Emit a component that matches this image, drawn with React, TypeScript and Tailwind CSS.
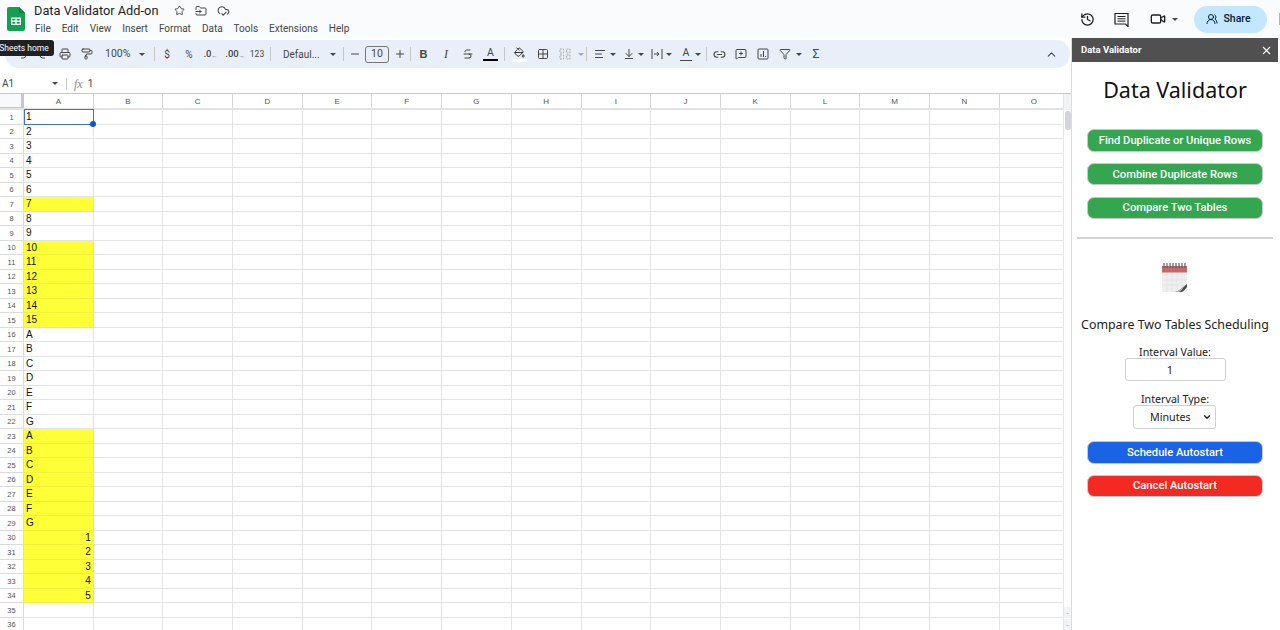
import type { ReactNode } from "react"
import {
  ArrowDownToLine,
  ChevronDown,
  ChevronUp,
  CloudCheck,
  Filter,
  FolderInput,
  Grid2x2,
  History,
  Link2,
  MessageSquarePlus,
  Minus,
  PaintBucket,
  PaintRoller,
  Plus,
  Printer,
  Redo2,
  Star,
  Strikethrough,
  Undo2,
  UsersRound,
  Video,
  X,
  AlignLeft,
} from "lucide-react"

const columns = ["A", "B", "C", "D", "E", "F", "G", "H", "I", "J", "K", "L", "M", "N", "O"]
const menus = ["File", "Edit", "View", "Insert", "Format", "Data", "Tools", "Extensions", "Help"]

type Row = { value?: string; yellow?: boolean; right?: boolean }

const rows: Row[] = [
  { value: "1" },
  { value: "2" },
  { value: "3" },
  { value: "4" },
  { value: "5" },
  { value: "6" },
  { value: "7", yellow: true },
  { value: "8" },
  { value: "9" },
  { value: "10", yellow: true },
  { value: "11", yellow: true },
  { value: "12", yellow: true },
  { value: "13", yellow: true },
  { value: "14", yellow: true },
  { value: "15", yellow: true },
  { value: "A" },
  { value: "B" },
  { value: "C" },
  { value: "D" },
  { value: "E" },
  { value: "F" },
  { value: "G" },
  { value: "A", yellow: true },
  { value: "B", yellow: true },
  { value: "C", yellow: true },
  { value: "D", yellow: true },
  { value: "E", yellow: true },
  { value: "F", yellow: true },
  { value: "G", yellow: true },
  { value: "1", yellow: true, right: true },
  { value: "2", yellow: true, right: true },
  { value: "3", yellow: true, right: true },
  { value: "4", yellow: true, right: true },
  { value: "5", yellow: true, right: true },
  {},
  {},
]

function Caret({ className = "" }: { className?: string }) {
  return (
    <span
      className={`inline-block h-0 w-0 shrink-0 border-x-[3px] border-t-[3px] border-x-transparent border-t-[#444746] ${className}`}
    />
  )
}

function Tool({ children, w = "w-[22px]" }: { children: ReactNode; w?: string }) {
  return <div className={`flex h-full shrink-0 items-center justify-center ${w}`}>{children}</div>
}

function Sep({ className = "" }: { className?: string }) {
  return <div className={`h-[14px] w-px shrink-0 bg-[#c7c7c7] ${className}`} />
}

function SheetsLogo() {
  return (
    <svg width="18" height="24" viewBox="0 0 18 24" className="shrink-0">
      <path d="M2 0h10l6 6v16a2 2 0 0 1-2 2H2a2 2 0 0 1-2-2V2a2 2 0 0 1 2-2z" fill="#12a150" />
      <path d="M12 0l6 6h-4.500A1.500 1.500 0 0 1 12 4.500z" fill="#0b7f3e" />
      <path d="M4 10.500h10v7.500H4z" fill="#fff" />
      <path d="M5.300 11.800h3v1.800h-3zM9.700 11.800h3v1.800h-3zM5.300 15h3v1.800h-3zM9.700 15h3v1.800h-3z" fill="#12a150" />
    </svg>
  )
}

function CommentIcon() {
  return (
    <svg width="15" height="15" viewBox="0 0 15 15" fill="none" stroke="#1f1f1f" strokeWidth="1.200" className="ml-[19px]">
      <path d="M1 1.500h13v13l-2.500-2.500H1z" />
      <path d="M3.500 4.500h8M3.500 6.800h8M3.500 9.100h8" strokeWidth="1" />
    </svg>
  )
}

function CalendarIcon() {
  return (
    <svg width="27" height="30" viewBox="0 0 27 30">
      <rect x="1" y="4" width="25" height="26" fill="#efefef" />
      <path d="M1 13h25M1 18h25M1 23h25M6 10v20M11 10v20M16 10v20M21 10v20" stroke="#e2e2e2" strokeWidth="0.7" />
      <rect x="1" y="4" width="25" height="6.500" fill="#c4686c" />
      <path d="M3 1v5M6 1v5M9 1v5M12 1v5M15 1v5M18 1v5M21 1v5M24 1v5" stroke="#55565a" strokeWidth="1.100" />
      <path d="M14 30c5-1 8-5 12-8v3c-2 2-3 4-5 5z" fill="#4a4a4a" />
      <path d="M14 30c4-1 6-3 9-6-1 3-3 5-5 6z" fill="#b5b5b5" />
    </svg>
  )
}

function Toolbar() {
  const icon = "h-[12px] w-[12px] text-[#444746]"
  return (
    <div className="relative ml-[5px] mt-[2px] flex h-[28px] w-[1065px] items-center rounded-full bg-[#e9eff8] pl-[6px] pr-[10px] font-['Roboto',sans-serif] text-[#444746]">
      <Tool><Undo2 className={icon} /></Tool>
      <Tool w="w-[21px]"><Redo2 className={icon} /></Tool>
      <Tool><Printer className={icon} /></Tool>
      <Tool><PaintRoller className={icon} /></Tool>
      <div className="flex h-full w-[50px] shrink-0 items-center pl-[7px] text-[10.500px]">
        100%
        <Caret className="ml-[9px]" />
      </div>
      <Sep className="ml-[6px] mr-[1px]" />
      <Tool><span className="text-[10px]">$</span></Tool>
      <Tool><span className="text-[10px]">%</span></Tool>
      <Tool w="w-[21px]"><span className="text-[9.500px] font-medium">.0<sub className="text-[6px]">←</sub></span></Tool>
      <Tool w="w-[25px]"><span className="pl-[3px] text-[9.500px] font-medium">.00<sub className="text-[6px]">→</sub></span></Tool>
      <Tool><span className="text-[8.500px]">123</span></Tool>
      <Sep className="ml-[2px] mr-[1px]" />
      <div className="flex h-full w-[71px] shrink-0 items-center pl-[11px] text-[10px]">
        Defaul...
        <Caret className="ml-[10px]" />
      </div>
      <Sep />
      <Tool><Minus className={icon} /></Tool>
      <div className="-ml-px flex h-[17px] w-[24px] shrink-0 items-center justify-center rounded-[3px] border border-[#747775] text-[10.500px]">
        10
      </div>
      <Tool w="w-[21px]"><Plus className={icon} /></Tool>
      <Sep />
      <Tool w="w-[24px]"><span className="pl-[1px] font-['Liberation_Sans',sans-serif] text-[11px] font-bold">B</span></Tool>
      <Tool><span className="font-['Liberation_Serif',serif] text-[12px] italic">I</span></Tool>
      <Tool><Strikethrough className={icon} /></Tool>
      <Tool w="w-[23px]">
        <div className="flex flex-col items-center leading-none">
          <span className="text-[10.500px] leading-[11px]">A</span>
          <span className="mt-px h-[2px] w-[15px] bg-black" />
        </div>
      </Tool>
      <Sep className="ml-[2px]" />
      <Tool w="w-[29px]">
        <div className="flex flex-col items-center">
          <PaintBucket className="h-[11px] w-[11px] text-[#1f1f1f]" />
          <span className="mt-px h-[3px] w-[15px] bg-white" />
        </div>
      </Tool>
      <Tool w="w-[18px]"><Grid2x2 className={icon} /></Tool>
      <Tool w="w-[26px]">
        <svg width="12" height="12" viewBox="0 0 12 12" fill="none" stroke="#a9abad" strokeWidth="1" strokeDasharray="2 1">
          <path d="M1 1h3.500v4H1zM7.500 1H11v4H7.500zM1 7h3.500v4H1zM7.500 7H11v4H7.500z" />
        </svg>
      </Tool>
      <Caret className="opacity-40" />
      <Sep className="ml-[2px] mr-[2px]" />
      <Tool w="w-[22px]"><AlignLeft className={icon} /></Tool>
      <Caret className="-ml-px" />
      <Tool w="w-[26px]"><ArrowDownToLine className={icon} /></Tool>
      <Caret className="-ml-[4px]" />
      <Tool w="w-[26px]">
        <svg width="12" height="12" viewBox="0 0 12 12" fill="none" stroke="#444746" strokeWidth="1">
          <path d="M1 1v10M11 1v10M3 6h5M6 4l2 2-2 2" />
        </svg>
      </Tool>
      <Caret className="-ml-[4px]" />
      <Tool w="w-[28px]">
        <div className="flex flex-col items-center leading-none">
          <span className="text-[10.500px] leading-[10px]">A</span>
          <span className="mt-[2px] h-px w-[12px] bg-[#444746]" />
        </div>
      </Tool>
      <Caret className="-ml-[5px]" />
      <Sep className="ml-[5px]" />
      <Tool w="w-[25px]"><Link2 className="h-[13px] w-[13px] text-[#444746]" /></Tool>
      <Tool w="w-[18px]"><MessageSquarePlus className={icon} /></Tool>
      <Tool w="w-[26px]">
        <svg width="12" height="12" viewBox="0 0 12 12" fill="none" stroke="#444746" strokeWidth="1">
          <rect x="1" y="1" width="10" height="10" rx="1" />
          <path d="M4 9V6M6.500 9V3M8.500 9V8" />
        </svg>
      </Tool>
      <Tool w="w-[18px]"><Filter className={icon} /></Tool>
      <Caret className="ml-[2px]" />
      <Tool w="w-[28px]"><span className="text-[12px]">Σ</span></Tool>
      <ChevronUp className="absolute left-[1040px] top-[8px] h-[13px] w-[13px] text-[#444746]" />
    </div>
  )
}

function FormulaBar() {
  return (
    <div className="mt-[4px] flex h-[21px] items-center pt-[2px] font-['Roboto',sans-serif] text-[10px] text-[#444746]">
      <span className="w-[52px] pl-[2px]">A1</span>
      <Caret />
      <span className="ml-[8px] h-[12px] w-px bg-[#c7c7c7]" />
      <span className="ml-[7px] font-['Liberation_Serif',serif] text-[12px] italic text-[#8b8d8f]">fx</span>
      <span className="ml-[5px]">1</span>
    </div>
  )
}

function Grid() {
  return (
    <div className="relative min-h-0 flex-1 overflow-hidden border-t border-[#c7c7c7] font-['Liberation_Sans',sans-serif]">
      <div className="grid h-[16px] grid-cols-[24px_repeat(15,69.7px)] border-b-2 border-[#e1e3e3] text-[8px] text-[#555]">
        <div className="border-b border-r-[3px] border-[#c4c7c5] bg-[#f8f9fa]" />
        {columns.map((c) => (
          <div key={c} className="flex items-center justify-center border-r border-[#d5d7d8] pt-px">{c}</div>
        ))}
      </div>
      {rows.map((row, i) => (
        <div key={i} className="grid h-[14.500px] grid-cols-[24px_repeat(15,69.7px)]">
          <div className="flex items-center justify-center border-b border-r border-[#d9dbdc] pt-px text-[7.500px] text-[#555]">
            {i + 1}
          </div>
          <div
            className={`relative flex items-center border-b border-r px-[2px] pt-px text-[10px] leading-none text-[#111] ${
              row.yellow ? "border-[#f1f13c] bg-[#ffff38]" : "border-[#e2e3e3]"
            } ${row.right ? "justify-end" : ""} ${i === 0 ? "z-10" : ""}`}
          >
            {row.value}
            {i === 0 && (
              <>
                <span className="absolute bottom-[-1px] left-0 right-[-1px] top-[-1px] border border-[#3f6fdd]" />
                <span className="absolute bottom-[-3px] right-[-3px] h-[6px] w-[6px] rounded-full bg-[#0b57d0]" />
              </>
            )}
          </div>
          {columns.slice(1).map((c) => (
            <div key={c} className="border-b border-r border-[#e2e3e3]" />
          ))}
        </div>
      ))}
      {/* scrollbar */}
      <div className="absolute bottom-0 right-0 top-0 z-20 w-[8px] border-l border-[#e6e6e6] bg-white">
        <div className="h-[16px] bg-[#f1f3f4]" />
        <div className="ml-[1px] mt-[1px] h-[19px] w-[6px] rounded-full bg-[#d3d5da]" />
        <div className="absolute bottom-[12px] left-0 flex h-[11px] w-full items-center justify-center bg-[#f1f3f4] text-[6px] leading-none text-[#666]">
          -
        </div>
        <div className="absolute bottom-0 left-0 flex h-[11px] w-full items-center justify-center bg-[#f1f3f4] text-[6px] leading-none text-[#666]">
          -
        </div>
      </div>
    </div>
  )
}

function PanelButton({ label, color }: { label: string; color: string }) {
  return (
    <button className={`h-[22.500px] w-[176px] rounded-[7px] border border-[#c9c9c9] pt-[2px] text-center font-['Roboto',sans-serif] text-[11.200px] font-medium text-white ${color}`}>
      {label}
    </button>
  )
}

function Panel() {
  return (
    <aside className="flex w-[209px] shrink-0 flex-col border-l border-[#dcdcdc] bg-white pr-[2px] font-['Noto_Sans',sans-serif]">
      <div className="flex h-[24px] items-center justify-between bg-[#505050] pl-[9px] pr-[5px] text-white">
        <span className="font-['Roboto',sans-serif] text-[9.500px] font-bold">Data Validator</span>
        <X className="h-[13px] w-[13px]" />
      </div>
      <h1 className="mt-[14px] text-center text-[21.500px] leading-[28px] text-[#111]">Data Validator</h1>
      <div className="mt-[25px] flex flex-col items-center gap-[11.300px]">
        <PanelButton label="Find Duplicate or Unique Rows" color="bg-[#34a64f]" />
        <PanelButton label="Combine Duplicate Rows" color="bg-[#34a64f]" />
        <PanelButton label="Compare Two Tables" color="bg-[#34a64f]" />
      </div>
      <div className="mx-[5px] mt-[18px] h-[2px] w-[196px] bg-[#d2d2d2]" />
      <div className="mt-[23px] flex justify-center pr-[1px]">
        <CalendarIcon />
      </div>
      <div className="mt-[24px] text-center text-[12.400px] leading-[18px] text-[#222]">Compare Two Tables Scheduling</div>
      <div className="mt-[11px] text-center text-[10.700px] leading-[15px] text-[#222]">Interval Value:</div>
      <div className="mt-[-2px] flex justify-center">
        <input
          readOnly
          value="1"
          className="h-[23px] w-[101px] rounded-[3px] border border-[#d0d0d0] bg-white pr-[10px] text-center text-[11px] text-[#222]"
        />
      </div>
      <div className="mt-[11px] text-center text-[10.700px] leading-[15px] text-[#222]">Interval Type:</div>
      <div className="-mt-[2px] flex justify-center pr-[1px]">
        <div className="flex h-[24px] w-[83px] items-center justify-between rounded-[3px] border border-[#d0d0d0] pl-[16px] pr-[3px] text-[10.700px] text-[#222]">
          Minutes
          <ChevronDown className="h-[10px] w-[10px]" strokeWidth={3} />
        </div>
      </div>
      <div className="mt-[12px] flex flex-col items-center gap-[11px]">
        <PanelButton label="Schedule Autostart" color="bg-[#1a62e6]" />
        <PanelButton label="Cancel Autostart" color="bg-[#f32a22]" />
      </div>
    </aside>
  )
}

export default function App() {
  return (
    <div className="relative flex h-[630px] w-[1280px] flex-col overflow-hidden bg-white">
      {/* Top header */}
      <header className="flex h-[38px] shrink-0 items-center bg-[#f9fbfd] pl-[7px] font-['Roboto',sans-serif] text-[#444746]">
        <SheetsLogo />
        <div className="ml-[9px] flex flex-col">
          <div className="-mt-px flex items-center">
            <span className="text-[12.800px] leading-[18px] text-[#1f1f1f]">Data Validator Add-on</span>
            <Star className="ml-[16px] h-[11px] w-[11px]" />
            <FolderInput className="ml-[10px] h-[12px] w-[12px]" />
            <CloudCheck className="ml-[10px] h-[13px] w-[13px]" />
          </div>
          <nav className="mt-[2px] flex gap-[11px] pl-px text-[10px] leading-[14px]">
            {menus.map((m) => (
              <span key={m}>{m}</span>
            ))}
          </nav>
        </div>
        <div className="ml-auto flex items-center">
          <History className="h-[15px] w-[15px] text-[#1f1f1f]" />
          <CommentIcon />
          <Video className="ml-[21px] h-[16px] w-[16px] text-[#1f1f1f]" />
          <Caret className="ml-[6px]" />
          <div className="ml-[16px] flex h-[27px] w-[73px] items-center justify-center gap-[5px] rounded-full bg-[#c2e7ff] pr-[4px] text-[10.500px] font-medium text-[#001d35]">
            <UsersRound className="h-[12px] w-[12px]" />
            Share
          </div>
          <div className="ml-[12px] h-[12px] w-[1px] bg-[#f5a54a]" />
        </div>
      </header>

      <div className="flex min-h-0 flex-1">
        <main className="flex w-[1071px] shrink-0 flex-col">
          <Toolbar />
          <FormulaBar />
          <Grid />
        </main>
        <Panel />
      </div>

      {/* Tooltip */}
      <div className="absolute left-[-6px] top-[40px] flex h-[16px] w-[60px] items-center justify-center rounded-[3px] bg-[#202124] font-['Roboto',sans-serif] text-[8.500px] text-white">
        Sheets home
      </div>
    </div>
  )
}
